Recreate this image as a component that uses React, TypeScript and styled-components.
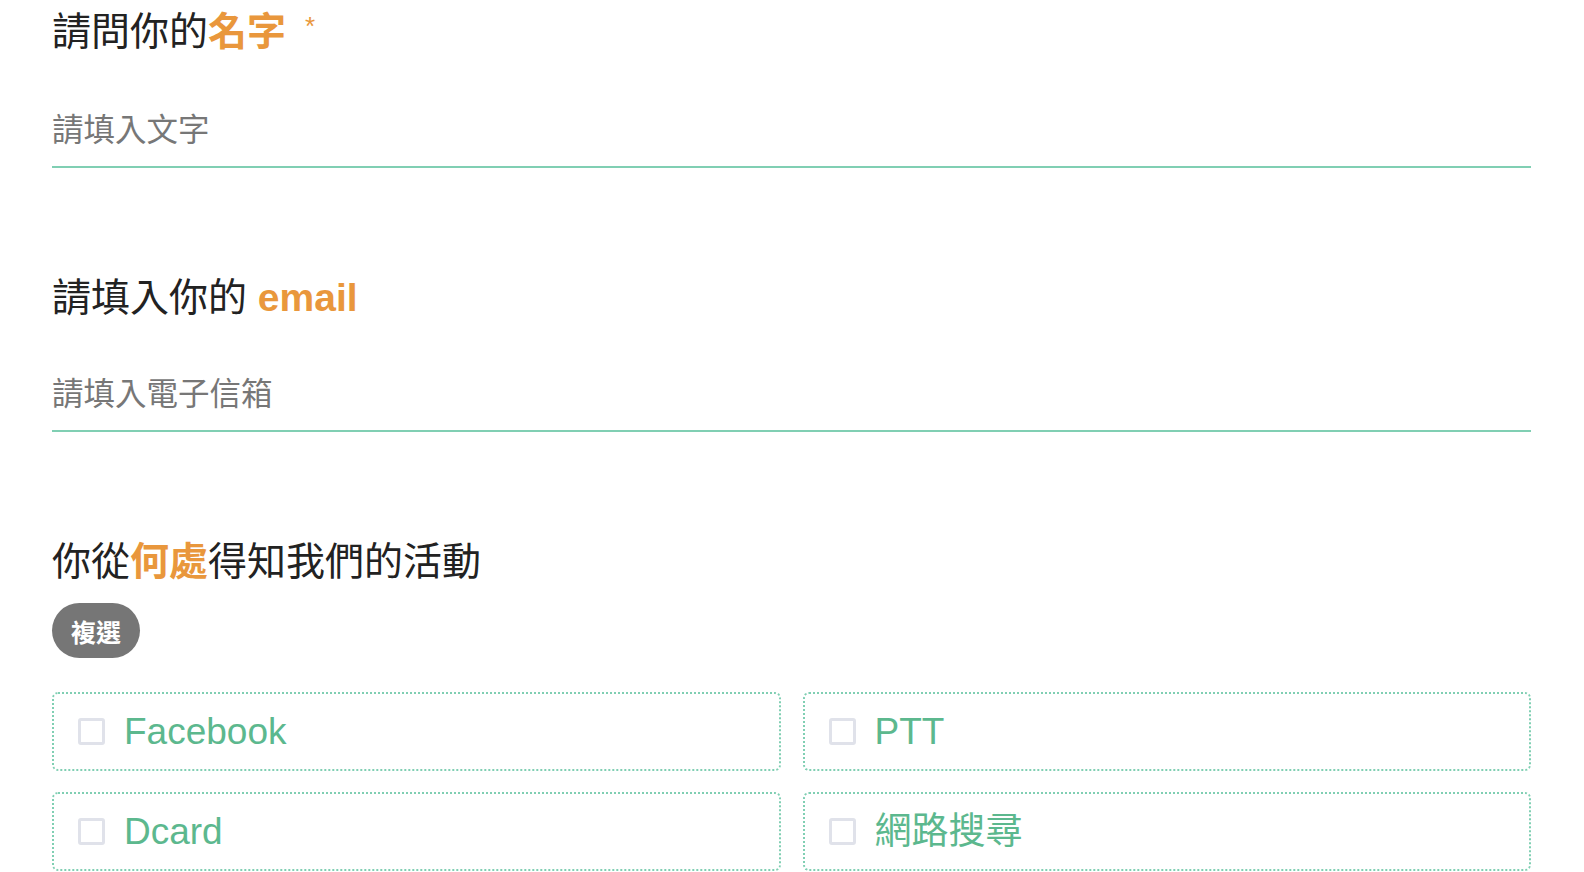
import styled, { createGlobalStyle } from "styled-components";

const GlobalStyle = createGlobalStyle`
  html, body {
    margin: 0;
    padding: 0;
    background: #ffffff;
    overflow: hidden;
  }
  body {
    font-family: "Liberation Sans", "Noto Sans CJK TC", sans-serif;
  }
`;

const mint = "#80cfb3";
const green = "#5cb88e";
const orange = "#e9973c";

const Page = styled.div`
  padding: 9px 53px 0 52px;
`;

const Section = styled.section<{ $gap?: number }>`
  margin-bottom: ${(p) => p.$gap ?? 107}px;
`;

const Title = styled.h2`
  margin: 0;
  font-size: 39px;
  line-height: 46px;
  font-weight: 400;
  color: #222;
  font-family: "Liberation Sans", "Noto Sans CJK TC", sans-serif;
  display: flex;
  align-items: flex-start;
`;

const Hl = styled.strong`
  color: ${orange};
  font-weight: 700;
`;

const Required = styled.span`
  color: ${orange};
  font-size: 26px;
  line-height: 26px;
  margin-left: 19px;
  margin-top: 4px;
`;

const TextInput = styled.input<{ $top?: number }>`
  display: block;
  box-sizing: border-box;
  width: 100%;
  height: 74px;
  margin-top: ${(p) => p.$top ?? 39}px;
  padding: 0;
  border: none;
  border-bottom: 2px solid ${mint};
  outline: none;
  background: transparent;
  font-size: 31.5px;
  font-family: "Liberation Sans", "Noto Sans CJK TC", sans-serif;
  color: #333;
  &::placeholder {
    color: #777;
  }
`;

const Badge = styled.span`
  display: inline-flex;
  align-items: center;
  justify-content: center;
  margin-top: 18px;
  height: 55px;
  padding: 0 19px;
  border-radius: 28px;
  background: #767676;
  color: #fff;
  font-size: 25px;
  font-weight: 700;
  font-family: "Noto Sans CJK TC", sans-serif;
`;

const Options = styled.div`
  display: grid;
  grid-template-columns: 1fr 1fr;
  column-gap: 22px;
  row-gap: 21px;
  margin-top: 34px;
`;

const Option = styled.label`
  display: flex;
  align-items: center;
  box-sizing: border-box;
  height: 79px;
  padding-left: 24px;
  border: 2px dotted ${mint};
  border-radius: 6px;
  cursor: pointer;
`;

const Box = styled.span`
  box-sizing: border-box;
  width: 27px;
  height: 27px;
  border: 3px solid #e0e2ea;
  border-radius: 3px;
  margin-right: 19px;
  flex-shrink: 0;
`;

const OptionText = styled.span`
  font-size: 37px;
  color: ${green};
  font-family: "Liberation Sans", "Noto Sans CJK TC", sans-serif;
  line-height: 1;
`;

const options = ["Facebook", "PTT", "Dcard", "網路搜尋"];

export default function App() {
  return (
    <>
      <GlobalStyle />
      <Page>
        <Section>
          <Title>
            請問你的<Hl>名字</Hl>
            <Required>*</Required>
          </Title>
          <TextInput placeholder="請填入文字" />
        </Section>
        <Section $gap={107}>
          <Title>
            請填入你的&nbsp;<Hl>email</Hl>
          </Title>
          <TextInput $top={37} placeholder="請填入電子信箱" />
        </Section>
        <Section $gap={0}>
          <Title>
            你從<Hl>何處</Hl>得知我們的活動
          </Title>
          <Badge>複選</Badge>
          <Options>
            {options.map((o) => (
              <Option key={o}>
                <Box />
                <OptionText>{o}</OptionText>
              </Option>
            ))}
          </Options>
        </Section>
      </Page>
    </>
  );
}
